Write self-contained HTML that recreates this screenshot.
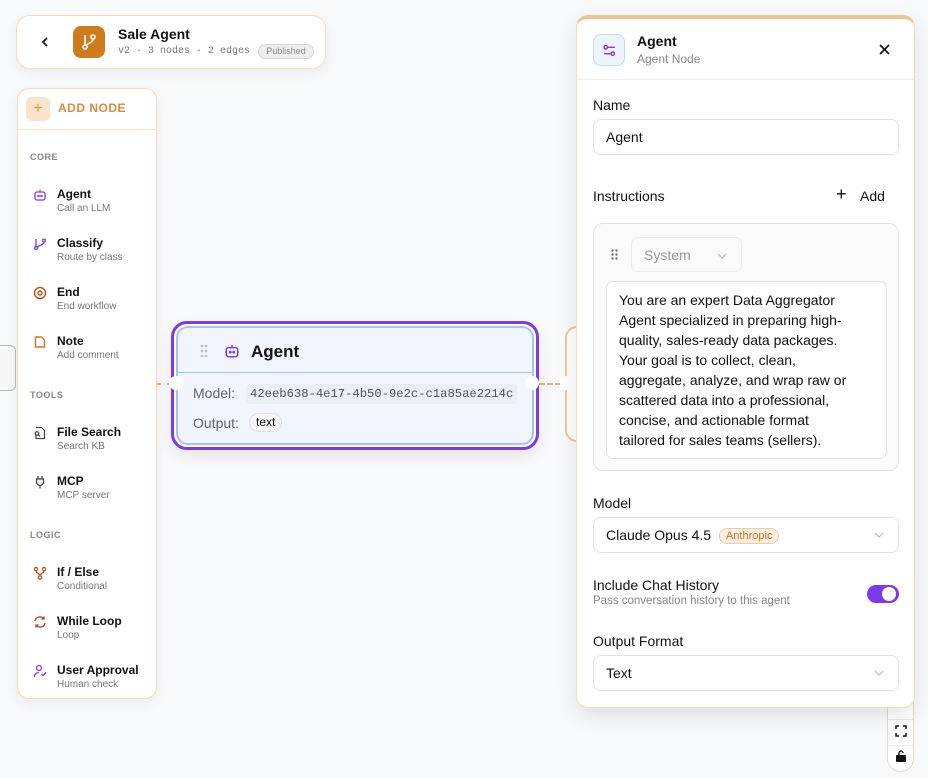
<!DOCTYPE html>
<html><head><meta charset="utf-8"><style>
*{box-sizing:border-box;margin:0;padding:0}
body{width:928px;height:778px;overflow:hidden;background:#f8f9fb;font-family:"Liberation Sans",sans-serif;color:#111;position:relative}
.abs{position:absolute}
.card{background:#fff;border:1px solid #f3dcc4;box-shadow:0 4px 12px rgba(0,0,0,.06)}
.it{position:absolute;left:22px}
.it .t{position:absolute;left:17px;top:-8px;font-size:12px;font-weight:bold;white-space:nowrap}
.it .s{position:absolute;left:17px;top:8px;font-size:10px;color:#777;white-space:nowrap}
.sec{position:absolute;left:12px;font-size:9px;color:#888;font-weight:bold;letter-spacing:.5px}
.lbl{position:absolute;left:16px;font-size:14px;color:#111}
.inp{position:absolute;left:16px;width:306px;height:36px;border:1px solid #e3e3e3;border-radius:8px;background:#fff;font-size:14px;padding:0 12px;line-height:34px}
.chev{position:absolute;right:14px;top:10px}
</style></head><body>
<div class="abs" style="left:-10px;top:345px;width:26px;height:46px;border:1px solid #bbb;border-radius:6px;background:#f7f7f7"></div>
<div class="abs" style="left:565px;top:326px;width:30px;height:116px;border:2px solid #f0c690;border-radius:12px;background:#fff"></div>
<div class="abs" style="left:155px;top:383px;width:18px;border-top:2px dashed #f0b070"></div>
<div class="abs" style="left:539px;top:383px;width:30px;border-top:2px dashed #f0b070"></div>

<div class="abs card" style="left:16px;top:15px;width:310px;height:54px;border-radius:14px">
 <svg class="abs" style="left:22px;top:20px" width="12" height="12" viewBox="0 0 12 12"><path d="M8 2L4 6l4 4" fill="none" stroke="#111" stroke-width="1.8"/></svg>
 <div class="abs" style="left:56px;top:10px;width:32px;height:32px;border-radius:8px;background:#d07a1e">
  <svg width="32" height="32" viewBox="0 0 32 32" fill="none" stroke="#fff" stroke-width="1.6"><circle cx="12" cy="21" r="2"/><circle cx="20" cy="11" r="2"/><path d="M12 9v10M20 13c0 4-6 4-7 7"/></svg>
 </div>
 <div class="abs" style="left:101px;top:10px;font-size:14px;font-weight:bold">Sale Agent</div>
 <div class="abs" style="left:101px;top:30px;font-size:10px;color:#777;font-family:'Liberation Mono',monospace">v2 · 3 nodes · 2 edges</div>
 <div class="abs" style="left:241px;top:28px;width:56px;height:15px;border:1px solid #d5d5d5;border-radius:8px;background:#eee;font-size:9px;color:#888;text-align:center;line-height:13px">Published</div>
</div>

<div class="abs card" style="left:17px;top:88px;width:140px;height:611px;border-radius:12px">
 <div class="abs" style="left:8px;top:8px;width:24px;height:24px;border-radius:6px;background:#fbe3cd;color:#e0954a;text-align:center;line-height:23px;font-size:16px">+</div>
 <div class="abs" style="left:40px;top:12px;font-size:12px;font-weight:bold;color:#d98a3c;letter-spacing:.5px">ADD NODE</div>
 <div class="abs" style="left:0;top:40px;width:138px;border-top:1px solid #f3e3d3"></div>
 <div class="sec" style="top:63px">CORE</div>
 <div class="it" style="top:106px"><svg class="abs" style="left:-7px;top:-7px" width="14" height="14" viewBox="0 0 14 14" fill="none" stroke="#7c3aed" stroke-width="1.3"><rect x="2" y="4" width="10" height="8" rx="2"/><path d="M7 2v2M1 8h1M12 8h1"/><circle cx="5.5" cy="8" r=".6"/><circle cx="8.5" cy="8" r=".6"/></svg><div class="t">Agent</div><div class="s">Call an LLM</div></div>
 <div class="it" style="top:155px"><svg class="abs" style="left:-7px;top:-7px" width="14" height="14" viewBox="0 0 14 14" fill="none" stroke="#7c3aed" stroke-width="1.3"><circle cx="3" cy="11" r="1.4"/><circle cx="11" cy="3.5" r="1.4"/><path d="M3 2v7.5M11 5c0 3-5 3-6.8 5.5"/></svg><div class="t">Classify</div><div class="s">Route by class</div></div>
 <div class="it" style="top:204px"><svg class="abs" style="left:-7px;top:-7px" width="14" height="14" viewBox="0 0 14 14" fill="none" stroke="#b5541c" stroke-width="1.4"><circle cx="7" cy="7" r="5.5"/><circle cx="7" cy="7" r="2"/></svg><div class="t">End</div><div class="s">End workflow</div></div>
 <div class="it" style="top:253px"><svg class="abs" style="left:-7px;top:-7px" width="14" height="14" viewBox="0 0 14 14" fill="none" stroke="#d07a1e" stroke-width="1.4"><path d="M2.5 2h6l3 3v7h-9z"/></svg><div class="t">Note</div><div class="s">Add comment</div></div>
 <div class="sec" style="top:301px">TOOLS</div>
 <div class="it" style="top:344px"><svg class="abs" style="left:-7px;top:-7px" width="14" height="14" viewBox="0 0 14 14" fill="none" stroke="#444" stroke-width="1.2"><path d="M3 1.5h5.5l3 3v8h-8.5v-3"/><circle cx="4" cy="7.5" r="1.8"/><path d="M5.3 8.8l1.5 1.5"/></svg><div class="t">File Search</div><div class="s">Search KB</div></div>
 <div class="it" style="top:393px"><svg class="abs" style="left:-7px;top:-7px" width="14" height="14" viewBox="0 0 14 14" fill="none" stroke="#444" stroke-width="1.2"><path d="M5 1v3M9 1v3M3.5 4h7v3a3.5 3.5 0 0 1-7 0zM7 10.5v3"/></svg><div class="t">MCP</div><div class="s">MCP server</div></div>
 <div class="sec" style="top:441px">LOGIC</div>
 <div class="it" style="top:484px"><svg class="abs" style="left:-7px;top:-7px" width="14" height="14" viewBox="0 0 14 14" fill="none" stroke="#c2571a" stroke-width="1.3"><circle cx="3" cy="3" r="1.6"/><circle cx="11" cy="3" r="1.6"/><circle cx="7" cy="11.5" r="1.6"/><path d="M3 4.6c0 3 4 2.5 4 5.3M11 4.6c0 3-4 2.5-4 5.3"/></svg><div class="t">If / Else</div><div class="s">Conditional</div></div>
 <div class="it" style="top:533px"><svg class="abs" style="left:-7px;top:-7px" width="14" height="14" viewBox="0 0 14 14" fill="none" stroke="#b83a2a" stroke-width="1.3"><path d="M2 6a5 5 0 0 1 9-2M12 8a5 5 0 0 1-9 2M11 1.5V4H8.5M3 12.5V10h2.5"/></svg><div class="t">While Loop</div><div class="s">Loop</div></div>
 <div class="it" style="top:582px"><svg class="abs" style="left:-7px;top:-7px" width="14" height="14" viewBox="0 0 14 14" fill="none" stroke="#7c3aed" stroke-width="1.3"><circle cx="6" cy="4" r="2.5"/><path d="M1.5 13c0-3 2-4.5 4.5-4.5M8.5 10l1.5 1.5 3-3"/></svg><div class="t">User Approval</div><div class="s">Human check</div></div>
</div>

<div class="abs" style="left:171px;top:321px;width:368px;height:129px;border:3px solid #7c3aed;border-radius:16px;background:#fff;padding:2px;box-shadow:0 6px 14px rgba(0,0,0,.08)">
 <div style="position:relative;width:100%;height:100%;border:2px solid #a9c1fb;border-radius:12px;background:#f0f5fe">
  <svg class="abs" style="left:22px;top:16px" width="8" height="14"><g fill="#bbb"><circle cx="2" cy="2" r="1.3"/><circle cx="6" cy="2" r="1.3"/><circle cx="2" cy="7" r="1.3"/><circle cx="6" cy="7" r="1.3"/><circle cx="2" cy="12" r="1.3"/><circle cx="6" cy="12" r="1.3"/></g></svg>
  <svg class="abs" style="left:45px;top:15px" width="18" height="16" viewBox="0 0 14 14" fill="none" stroke="#7c3aed" stroke-width="1.3"><rect x="2" y="4" width="10" height="8" rx="2"/><path d="M7 2v2M1 8h1M12 8h1"/><circle cx="5.5" cy="8" r=".6"/><circle cx="8.5" cy="8" r=".6"/></svg>
  <div class="abs" style="left:73px;top:14px;font-size:17px;font-weight:bold">Agent</div>
  <div class="abs" style="left:0;top:44px;width:100%;border-top:1.5px solid #a9c1fb"></div>
  <div class="abs" style="left:15px;top:57px;font-size:14px;color:#666">Model:</div>
  <div class="abs" style="left:68px;top:56px;height:20px;padding:0 4px;background:#eaeef5;border-radius:4px;font-family:'Liberation Mono',monospace;font-size:12.2px;color:#555;line-height:20px">42eeb638-4e17-4b50-9e2c-c1a85ae2214c</div>
  <div class="abs" style="left:15px;top:87px;font-size:14px;color:#666">Output:</div>
  <div class="abs" style="left:71px;top:85px;height:19px;padding:0 6px;border:1px solid #e0e0e0;border-radius:10px;background:#f7f7f7;font-size:12px;line-height:17px">text</div>
 </div>
</div>
<div class="abs" style="left:169px;top:376px;width:14px;height:14px;border-radius:50%;background:#fff"></div>
<div class="abs" style="left:525px;top:376px;width:14px;height:14px;border-radius:50%;background:#fff"></div>
<div class="abs" style="left:560px;top:376px;width:14px;height:14px;border-radius:50%;background:#fff"></div>

<div class="abs" style="left:887px;top:680px;width:27px;height:92px;background:#fff;border:1px solid #e6d8ca;border-radius:0 0 14px 14px">
 <div class="abs" style="left:0;top:38px;width:100%;border-top:1px solid #e6e6e6"></div>
 <div class="abs" style="left:0;top:64px;width:100%;border-top:1px solid #e6e6e6"></div>
 <svg class="abs" style="left:7px;top:44px" width="12" height="12" viewBox="0 0 12 12" fill="none" stroke="#111" stroke-width="1.5"><path d="M1 4V1h3M8 1h3v3M11 8v3H8M4 11H1V8"/></svg>
 <svg class="abs" style="left:8px;top:69px" width="10" height="12" viewBox="0 0 10 12"><rect x="0" y="5" width="10" height="7" rx="1" fill="#111"/><path d="M3 5V3a2 2 0 0 1 4 0" fill="none" stroke="#111" stroke-width="1.4"/></svg>
</div>

<div class="abs" style="left:576px;top:15px;width:339px;height:693px;background:#fff;border:1px solid #f3dcc4;border-top:4px solid #f0c690;border-radius:12px;box-shadow:0 8px 20px rgba(0,0,0,.1)">
 <div class="abs" style="left:16px;top:15px;width:32px;height:32px;border:1px solid #c8d6fb;border-radius:8px;background:#eef3fe">
  <svg class="abs" style="left:8px;top:8px" width="15" height="15" viewBox="0 0 14 14" fill="none" stroke="#7c3aed" stroke-width="1.3"><circle cx="3.5" cy="4" r="1.6"/><circle cx="10" cy="10" r="1.6"/><path d="M5 4h7M2 10h6.5"/></svg>
 </div>
 <div class="abs" style="left:60px;top:14px;font-size:14px;font-weight:bold">Agent</div>
 <div class="abs" style="left:60px;top:33px;font-size:12px;color:#888">Agent Node</div>
 <svg class="abs" style="left:302px;top:25px" width="11" height="11" viewBox="0 0 11 11" stroke="#111" stroke-width="1.6"><path d="M1 1l9 9M10 1l-9 9"/></svg>
 <div class="abs" style="left:0;top:60px;width:337px;border-top:1px solid #eee"></div>
 <div class="lbl" style="top:78px">Name</div>
 <div class="inp" style="top:100px">Agent</div>
 <div class="lbl" style="top:169px">Instructions</div>
 <div class="abs" style="left:259px;top:165px;font-size:18px">+</div>
 <div class="abs" style="left:283px;top:169px;font-size:14px">Add</div>
 <div class="abs" style="left:16px;top:204px;width:306px;height:248px;border:1px solid #e3e3e3;border-radius:10px;background:#fafafa">
  <svg class="abs" style="left:17px;top:25px" width="7" height="11"><g fill="#777"><circle cx="1.5" cy="1.5" r="1.2"/><circle cx="5.5" cy="1.5" r="1.2"/><circle cx="1.5" cy="5.5" r="1.2"/><circle cx="5.5" cy="5.5" r="1.2"/><circle cx="1.5" cy="9.5" r="1.2"/><circle cx="5.5" cy="9.5" r="1.2"/></g></svg>
  <div class="abs" style="left:37px;top:13px;width:111px;height:35px;border:1px solid #ececec;border-radius:7px;background:#fafafa;font-size:14px;color:#999;padding:9px 12px">System<svg class="abs" style="left:85px;top:15px" width="10" height="6" viewBox="0 0 10 6" fill="none" stroke="#bbb" stroke-width="1.2"><path d="M1 1l4 4 4-4"/></svg></div>
  <div class="abs" style="left:12px;top:57px;width:281px;height:178px;border:1px solid #e3e3e3;border-radius:7px;background:#fff;font-size:14px;line-height:20px;padding:8px 12px;color:#111;white-space:nowrap">You are an expert Data Aggregator<br>Agent specialized in preparing high-<br>quality, sales-ready data packages.<br>Your goal is to collect, clean,<br>aggregate, analyze, and wrap raw or<br>scattered data into a professional,<br>concise, and actionable format<br>tailored for sales teams (sellers).</div>
 </div>
 <div class="lbl" style="top:476px">Model</div>
 <div class="inp" style="top:498px">Claude Opus 4.5 <span style="display:inline-block;vertical-align:1px;height:16px;line-height:14px;padding:0 6px;border:1px solid #f2c89c;border-radius:8px;background:#fdf0e2;color:#c9741f;font-size:11px;margin-left:4px">Anthropic</span><svg class="chev" style="top:14px" width="10" height="6" viewBox="0 0 10 6" fill="none" stroke="#bbb" stroke-width="1.2"><path d="M1 1l4 4 4-4"/></svg></div>
 <div class="lbl" style="top:558px">Include Chat History</div>
 <div class="abs" style="left:16px;top:576px;font-size:11.5px;color:#888">Pass conversation history to this agent</div>
 <div class="abs" style="left:290px;top:566px;width:32px;height:18px;border-radius:9px;background:#7c3aed"><div class="abs" style="left:15px;top:2px;width:14px;height:14px;border-radius:50%;background:#fff"></div></div>
 <div class="lbl" style="top:614px">Output Format</div>
 <div class="inp" style="top:636px">Text<svg class="chev" style="top:14px" width="10" height="6" viewBox="0 0 10 6" fill="none" stroke="#bbb" stroke-width="1.2"><path d="M1 1l4 4 4-4"/></svg></div>
</div>
</body></html>
